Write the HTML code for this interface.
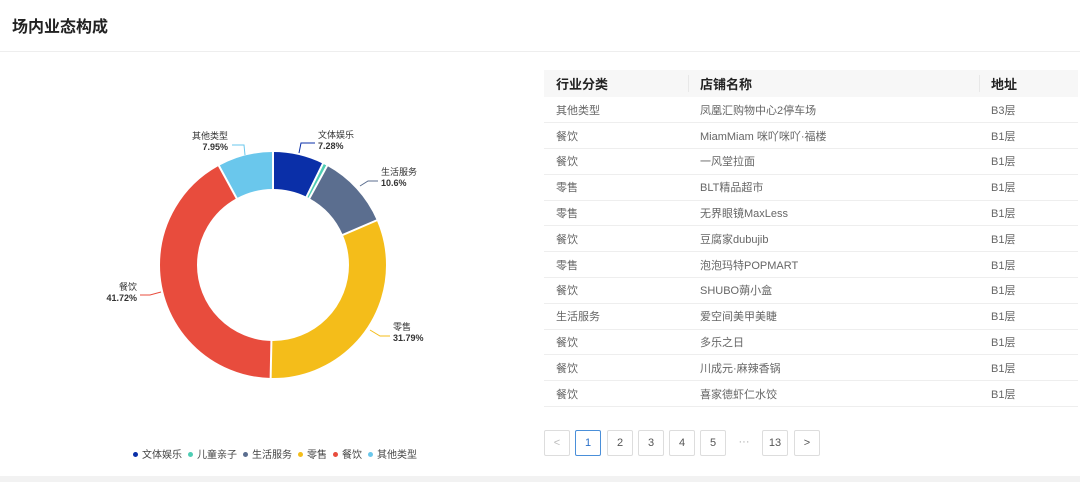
<!DOCTYPE html>
<html><head><meta charset="utf-8"><style>
*{margin:0;padding:0;box-sizing:border-box}
body{width:1080px;height:482px;background:#fff;font-family:"Liberation Sans","Noto Sans CJK SC",sans-serif;position:relative;overflow:hidden;color:#333}
.title{position:absolute;left:12px;top:13px;font-size:16px;font-weight:bold;color:#222}
.hr{position:absolute;left:0;top:51px;width:1080px;height:1px;background:#eee}
.band{position:absolute;left:0;top:476px;width:1080px;height:6px;background:#f2f2f2}
table{position:absolute;left:544px;top:70px;width:534px;border-collapse:collapse;font-size:11px;color:#666}
th{height:27px;background:#f7f7f7;text-align:left;font-size:13px;color:#222;font-weight:bold;padding-left:12px;position:relative}
td{height:25.8px;border-bottom:1px solid #eee;padding-left:12px}
th.d::before{content:"";position:absolute;left:0;top:5px;height:17px;width:1px;background:#e8e8e8}
.pg{position:absolute;top:430px;width:26px;height:26px;border:1px solid #ddd;border-radius:2px;font-size:11px;color:#555;text-align:center;line-height:24px}
.pg.a{border-color:#4a8fd9;color:#2a6fc9}
.lbl{position:absolute;font-size:9px;color:#333;line-height:11px}
.lbl b{display:block}
.lg{position:absolute;left:133px;top:446px;font-size:10px;color:#444;white-space:nowrap}
.lg i{display:inline-block;width:5px;height:5px;border-radius:50%;margin:0 4px 1px 0;vertical-align:middle}
.lg span{margin-right:6px}
</style></head><body>
<div class="title">场内业态构成</div>
<div class="hr"></div>
<svg style="position:absolute;left:0;top:0" width="540" height="476">
<g transform="translate(273,265) rotate(-90)" fill="none" stroke-width="37">
<circle r="94.5" pathLength="100" stroke="#0a2fa8" stroke-dasharray="7.28 100" stroke-dashoffset="0"/>
<circle r="94.5" pathLength="100" stroke="#4ecdb4" stroke-dasharray="0.66 100" stroke-dashoffset="-7.28"/>
<circle r="94.5" pathLength="100" stroke="#5b6e8f" stroke-dasharray="10.6 100" stroke-dashoffset="-7.94"/>
<circle r="94.5" pathLength="100" stroke="#f4bd1a" stroke-dasharray="31.79 100" stroke-dashoffset="-18.54"/>
<circle r="94.5" pathLength="100" stroke="#e84c3d" stroke-dasharray="41.72 100" stroke-dashoffset="-50.33"/>
<circle r="94.5" pathLength="100" stroke="#6ac7ec" stroke-dasharray="7.95 100" stroke-dashoffset="-92.05"/>
</g>
<g transform="translate(273,265)" stroke="#fff" stroke-width="2">
<line x1="0" y1="-74" x2="0" y2="-115"/>
<line x1="0" y1="-74" x2="0" y2="-115" transform="rotate(26.2)"/>
<line x1="0" y1="-74" x2="0" y2="-115" transform="rotate(28.6)"/>
<line x1="0" y1="-74" x2="0" y2="-115" transform="rotate(66.7)"/>
<line x1="0" y1="-74" x2="0" y2="-115" transform="rotate(181.2)"/>
<line x1="0" y1="-74" x2="0" y2="-115" transform="rotate(331.4)"/>
</g>
<g fill="none" stroke-width="1">
<polyline points="299,153 301,143 315,143" stroke="#0a2fa8"/>
<polyline points="360,186 368,181 378,181" stroke="#5b6e8f"/>
<polyline points="370,330 380,336 390,336" stroke="#f4bd1a"/>
<polyline points="161,292 150,295 140,295" stroke="#e84c3d"/>
<polyline points="245,155 244,145 232,145" stroke="#6ac7ec"/>
</g>
</svg>
<div class="lbl" style="left:318px;top:130px">文体娱乐<b>7.28%</b></div>
<div class="lbl" style="left:381px;top:167px">生活服务<b>10.6%</b></div>
<div class="lbl" style="left:393px;top:322px">零售<b>31.79%</b></div>
<div class="lbl" style="left:100px;top:282px;text-align:right;width:37px">餐饮<b>41.72%</b></div>
<div class="lbl" style="left:180px;top:131px;text-align:right;width:48px">其他类型<b>7.95%</b></div>
<div class="lg"><span><i style="background:#0a2fa8"></i>文体娱乐</span><span><i style="background:#4ecdb4"></i>儿童亲子</span><span><i style="background:#5b6e8f"></i>生活服务</span><span><i style="background:#f4bd1a"></i>零售</span><span><i style="background:#e84c3d"></i>餐饮</span><span><i style="background:#6ac7ec"></i>其他类型</span></div>
<table>
<tr><th style="width:144px">行业分类</th><th class="d" style="width:291px">店铺名称</th><th class="d">地址</th></tr>
<tr><td>其他类型</td><td>凤凰汇购物中心2停车场</td><td>B3层</td></tr>
<tr><td>餐饮</td><td>MiamMiam 咪吖咪吖·福楼</td><td>B1层</td></tr>
<tr><td>餐饮</td><td>一风堂拉面</td><td>B1层</td></tr>
<tr><td>零售</td><td>BLT精品超市</td><td>B1层</td></tr>
<tr><td>零售</td><td>无界眼镜MaxLess</td><td>B1层</td></tr>
<tr><td>餐饮</td><td>豆腐家dubujib</td><td>B1层</td></tr>
<tr><td>零售</td><td>泡泡玛特POPMART</td><td>B1层</td></tr>
<tr><td>餐饮</td><td>SHUBO蒴小盒</td><td>B1层</td></tr>
<tr><td>生活服务</td><td>爱空间美甲美睫</td><td>B1层</td></tr>
<tr><td>餐饮</td><td>多乐之日</td><td>B1层</td></tr>
<tr><td>餐饮</td><td>川成元·麻辣香锅</td><td>B1层</td></tr>
<tr><td>餐饮</td><td>喜家德虾仁水饺</td><td>B1层</td></tr>
</table>
<div class="pg" style="left:544px;color:#bbb">&lt;</div>
<div class="pg a" style="left:575px">1</div>
<div class="pg" style="left:607px">2</div>
<div class="pg" style="left:638px">3</div>
<div class="pg" style="left:669px">4</div>
<div class="pg" style="left:700px">5</div>
<div class="pg" style="left:731px;border:none;color:#aaa">···</div>
<div class="pg" style="left:762px">13</div>
<div class="pg" style="left:794px">&gt;</div>
<div class="band"></div>
</body></html>
